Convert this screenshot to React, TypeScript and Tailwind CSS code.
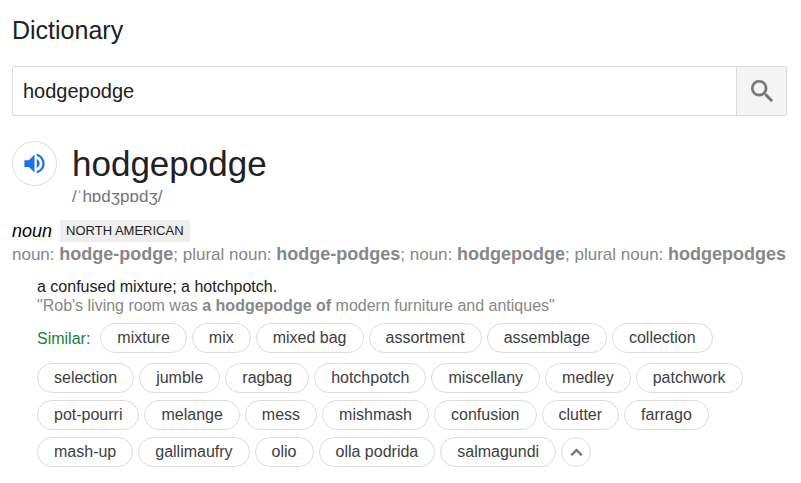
import { useState } from "react";

const firstSimilar = ["mixture", "mix", "mixed bag", "assortment", "assemblage", "collection"];

const moreSimilar = [
  "selection", "jumble", "ragbag", "hotchpotch", "miscellany", "medley", "patchwork",
  "pot-pourri", "melange", "mess", "mishmash", "confusion", "clutter", "farrago",
  "mash-up", "gallimaufry", "olio", "olla podrida", "salmagundi",
];

const forms = [
  { label: "noun", word: "hodge-podge" },
  { label: "plural noun", word: "hodge-podges" },
  { label: "noun", word: "hodgepodge" },
  { label: "plural noun", word: "hodgepodges" },
];

function Chip({ word }: { word: string }) {
  return (
    <button
      type="button"
      className="flex h-[30px] items-center rounded-full border border-[#dadce0] px-4 text-[16px] leading-5 whitespace-nowrap text-[#3c4043]"
    >
      {word}
    </button>
  );
}

export default function App() {
  const [query, setQuery] = useState("hodgepodge");
  const [expanded, setExpanded] = useState(true);

  return (
    <main className="bg-white pt-[15px] pr-3.5 pb-4 pl-3 font-['Liberation_Sans',Arial,sans-serif] text-[#202124]">
      <h2 className="text-[25px] leading-[30px]">Dictionary</h2>

      <form
        role="search"
        onSubmit={(e) => e.preventDefault()}
        className="mt-[21px] flex h-[50px] overflow-hidden rounded-xs border border-[#dadada]"
      >
        <input
          type="text"
          aria-label="Look up a word"
          value={query}
          onChange={(e) => setQuery(e.target.value)}
          className="min-w-0 flex-1 px-2.5 text-[20px] outline-none"
        />
        <button
          type="submit"
          aria-label="Search"
          className="flex w-[50px] items-center justify-center border-l border-[#dadada] bg-[#f4f4f4]"
        >
          <svg viewBox="3 3 17.5 17.5" className="size-[22px] fill-[#757575]" aria-hidden="true">
            <path
              d="M15.5 14h-.79l-.28-.27A6.47 6.47 0 0 0 16 9.5 6.5 6.5 0 1 0 9.5 16c1.61 0 3.09-.59 4.23-1.57l.27.28v.79l5 4.99L20.49 19l-4.99-5zm-6 0C7.01 14 5 11.99 5 9.5S7.01 5 9.5 5 14 7.01 14 9.5 11.99 14 9.5 14z"
              stroke="#757575"
              strokeWidth="0.2"
            />
          </svg>
        </button>
      </form>

      <header className="mt-[25px] flex gap-[15px]">
        <button
          type="button"
          aria-label="Listen to pronunciation"
          className="flex size-[45px] shrink-0 items-center justify-center rounded-full border border-[#dadce0]"
        >
          <svg viewBox="0 0 24 24" className="size-[27px] fill-[#1a73e8]" aria-hidden="true">
            <path d="M3 9v6h4l5 5V4L7 9H3z" />
            <path d="M14 7.97v8.05c1.48-.73 2.5-2.25 2.5-4.02 0-1.77-1.02-3.29-2.5-4.03z" />
            <path d="M14 3.23v2.06c2.89.86 5 3.54 5 6.71s-2.11 5.85-5 6.71v2.06c4.01-.91 7-4.49 7-8.77s-2.99-7.86-7-8.77z" />
          </svg>
        </button>
        <div>
          <h1 className="text-[35px] leading-[46px]">hodgepodge</h1>
          <p className="text-[17px] leading-5 text-[#70757a]">/ˈhɒdʒpɒdʒ/</p>
        </div>
      </header>

      <div className="mt-[13px] flex items-center gap-2">
        <i className="text-[18px] leading-[22px] text-black">noun</i>
        <span className="rounded-xs bg-[#eeeeee] px-1.5 text-[13px] leading-[22px]">NORTH AMERICAN</span>
      </div>

      <p className="text-[17px] leading-6 text-[#878787]">
        {forms.map((form, i) => (
          <span key={form.word}>
            {form.label}: <b className="text-[18px]">{form.word}</b>
            {i < forms.length - 1 && "; "}
          </span>
        ))}
      </p>

      <section className="mt-2.5 pl-[25px] text-[16px] leading-[19px]">
        <p>a confused mixture; a hotchpotch.</p>
        <p className="text-[#878787]">
          "Rob's living room was <b>a hodgepodge of</b> modern furniture and antiques"
        </p>

        <div className="mt-2 flex flex-wrap items-center gap-x-[5px] gap-y-[7px]">
          <span className="mr-[5px] text-[#188038]">Similar:</span>
          {firstSimilar.map((word) => (
            <Chip key={word} word={word} />
          ))}
        </div>

        <div className="mt-2.5 flex flex-wrap gap-x-[5px] gap-y-[7px]">
          {expanded && moreSimilar.map((word) => <Chip key={word} word={word} />)}
          <button
            type="button"
            aria-label="Toggle more similar words"
            aria-expanded={expanded}
            onClick={() => setExpanded(!expanded)}
            className="flex size-[30px] items-center justify-center rounded-full border border-[#dadce0]"
          >
            <svg viewBox="0 0 24 24" className="size-[23px] fill-[#70757a]" aria-hidden="true">
              <path d="M12 8l-6 6 1.41 1.41L12 10.83l4.59 4.58L18 14z" stroke="#70757a" strokeWidth="0.6" />
            </svg>
          </button>
        </div>
      </section>
    </main>
  );
}
